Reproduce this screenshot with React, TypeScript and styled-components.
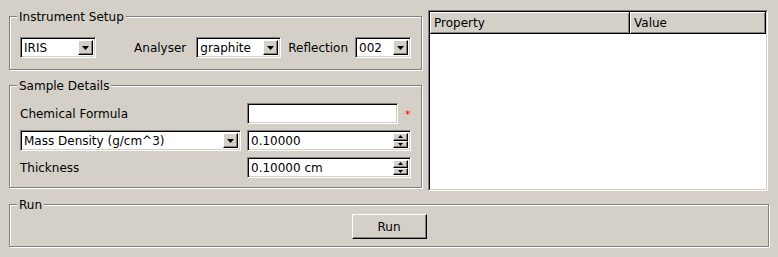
import React from "react";
import styled, { createGlobalStyle } from "styled-components";

const Global = createGlobalStyle`
  html, body { margin: 0; padding: 0; background: #d4d0c8; }
  body {
    font-family: "DejaVu Sans", "Liberation Sans", sans-serif;
    font-size: 12px;
    color: #000;
  }
  * { box-sizing: border-box; }
`;

const Window = styled.div`
  width: 778px;
  height: 257px;
  padding: 10px 10px 0 9px;
  display: flex;
  flex-direction: column;
`;

const TopRow = styled.div`
  display: flex;
  gap: 6px;
  height: 181px;
`;

const LeftColumn = styled.div`
  width: 413px;
  display: flex;
  flex-direction: column;
  gap: 15px;
  padding-top: 6px;
`;

const GroupBox = styled.div<{ $h: number; $w?: number }>`
  position: relative;
  height: ${(p) => p.$h}px;
  width: ${(p) => (p.$w ? `${p.$w}px` : "auto")};
  border: 1px solid #808080;
  box-shadow: inset 1px 1px 0 #fff, 1px 1px 0 #fff;
`;

const GroupTitle = styled.span`
  position: absolute;
  top: -7px;
  left: 7px;
  padding: 0 2px;
  line-height: 14px;
  background: #d4d0c8;
  white-space: nowrap;
`;

const InstrumentRow = styled.div`
  display: flex;
  align-items: center;
  padding: 20px 10px 0 10px;
`;

const Spacer = styled.div`
  flex: 1;
`;

const Label = styled.span<{ $ml?: number; $mr?: number }>`
  margin-left: ${(p) => p.$ml ?? 0}px;
  margin-right: ${(p) => p.$mr ?? 0}px;
  white-space: nowrap;
  line-height: 14px;
`;

const SunkenField = styled.div<{ $w?: number }>`
  width: ${(p) => (p.$w ? `${p.$w}px` : "100%")};
  height: 21px;
  display: flex;
  align-items: stretch;
  border: 1px solid;
  border-color: #808080 #fff #fff #808080;
  background: #fff;
  box-shadow: inset 1px 1px 0 #000, inset -1px -1px 0 #d4d0c8;
  padding: 1px;
`;

const FieldText = styled.span`
  flex: 1;
  padding-left: 2px;
  display: flex;
  align-items: center;
  white-space: nowrap;
  overflow: hidden;
`;

const ArrowButton = styled.div`
  width: 15px;
  margin: 1px 1px 1px 0;
  background: #d4d0c8;
  border: 1px solid;
  border-color: #fff #000 #000 #fff;
  box-shadow: inset -1px -1px 0 #808080;
  display: flex;
  align-items: center;
  justify-content: center;
`;

const SpinColumn = styled.div`
  width: 15px;
  display: flex;
  flex-direction: column;
  margin: 1px 1px 1px 0;
`;

const SpinButton = styled.div`
  flex: 1;
  background: #d4d0c8;
  border: 1px solid;
  border-color: #fff #000 #000 #fff;
  box-shadow: inset -1px -1px 0 #808080;
  display: flex;
  align-items: center;
  justify-content: center;
`;

const SampleGrid = styled.div`
  display: grid;
  grid-template-columns: 221px 164px;
  grid-auto-rows: 21px;
  column-gap: 6px;
  row-gap: 6px;
  padding: 17px 10px 0 10px;
  align-items: center;
`;

const FieldWithMark = styled.div`
  display: flex;
  align-items: center;
  height: 21px;
`;

const RequiredMark = styled.span`
  color: #ff0000;
  margin-left: 7px;
  font-size: 11px;
  line-height: 11px;
  margin-top: 1px;
`;

const TableFrame = styled.div`
  width: 340px;
  height: 181px;
  border: 1px solid;
  border-color: #808080 #fff #fff #808080;
`;

const TableInner = styled.div`
  height: 100%;
  border: 1px solid;
  border-color: #000 #d4d0c8 #d4d0c8 #000;
  background: #fff;
  display: flex;
  flex-direction: column;
`;

const HeaderRow = styled.div`
  display: flex;
  height: 22px;
`;

const HeaderSection = styled.div<{ $w?: number }>`
  ${(p) => (p.$w ? `width: ${p.$w}px;` : "flex: 1;")}
  height: 22px;
  background: #d4d0c8;
  border-right: 1px solid #000;
  border-bottom: 1px solid #000;
  box-shadow: inset 1px 1px 0 #fff, inset -1px -1px 0 #808080;
  padding: 1px 0 0 4px;
  display: flex;
  align-items: center;
  white-space: nowrap;
`;

const RunRow = styled.div`
  display: flex;
  justify-content: center;
  padding-top: 9px;
`;

const PushButton = styled.button`
  width: 75px;
  height: 25px;
  padding: 0;
  font: inherit;
  color: #000;
  background: #d4d0c8;
  border: 1px solid;
  border-color: #fff #000 #000 #fff;
  box-shadow: inset -1px -1px 0 #808080;
`;

const DownArrow = () => (
  <svg width="7" height="4" viewBox="0 0 7 4">
    <path d="M0 0H7L3.5 4Z" fill="#000" />
  </svg>
);

const SmallArrow = ({ up }: { up?: boolean }) => (
  <svg width="5" height="3" viewBox="0 0 5 3">
    <path d={up ? "M2.5 0L5 3H0Z" : "M0 0H5L2.5 3Z"} fill="#000" />
  </svg>
);

const Combo = ({ w, value }: { w?: number; value: string }) => (
  <SunkenField $w={w}>
    <FieldText>{value}</FieldText>
    <ArrowButton>
      <DownArrow />
    </ArrowButton>
  </SunkenField>
);

const Spin = ({ value }: { value: string }) => (
  <SunkenField>
    <FieldText>{value}</FieldText>
    <SpinColumn>
      <SpinButton>
        <SmallArrow up />
      </SpinButton>
      <SpinButton>
        <SmallArrow />
      </SpinButton>
    </SpinColumn>
  </SunkenField>
);

export default function App() {
  return (
    <>
      <Global />
      <Window>
        <TopRow>
          <LeftColumn>
            <GroupBox $h={54}>
              <GroupTitle>Instrument Setup</GroupTitle>
              <InstrumentRow>
                <Combo w={76} value="IRIS" />
                <Spacer />
                <Label $mr={10}>Analyser</Label>
                <Combo w={85} value="graphite" />
                <Label $ml={7} $mr={7}>
                  Reflection
                </Label>
                <Combo w={56} value="002" />
              </InstrumentRow>
            </GroupBox>
            <GroupBox $h={103}>
              <GroupTitle>Sample Details</GroupTitle>
              <SampleGrid>
                <Label>Chemical Formula</Label>
                <FieldWithMark>
                  <SunkenField $w={151}>
                    <FieldText />
                  </SunkenField>
                  <RequiredMark>*</RequiredMark>
                </FieldWithMark>
                <Combo value="Mass Density (g/cm^3)" />
                <Spin value="0.10000" />
                <Label>Thickness</Label>
                <Spin value="0.10000 cm" />
              </SampleGrid>
            </GroupBox>
          </LeftColumn>
          <TableFrame>
            <TableInner>
              <HeaderRow>
                <HeaderSection $w={200}>Property</HeaderSection>
                <HeaderSection>Value</HeaderSection>
              </HeaderRow>
            </TableInner>
          </TableFrame>
        </TopRow>
        <GroupBox $h={43} $w={760} style={{ marginTop: 13 }}>
          <GroupTitle>Run</GroupTitle>
          <RunRow>
            <PushButton>Run</PushButton>
          </RunRow>
        </GroupBox>
      </Window>
    </>
  );
}
